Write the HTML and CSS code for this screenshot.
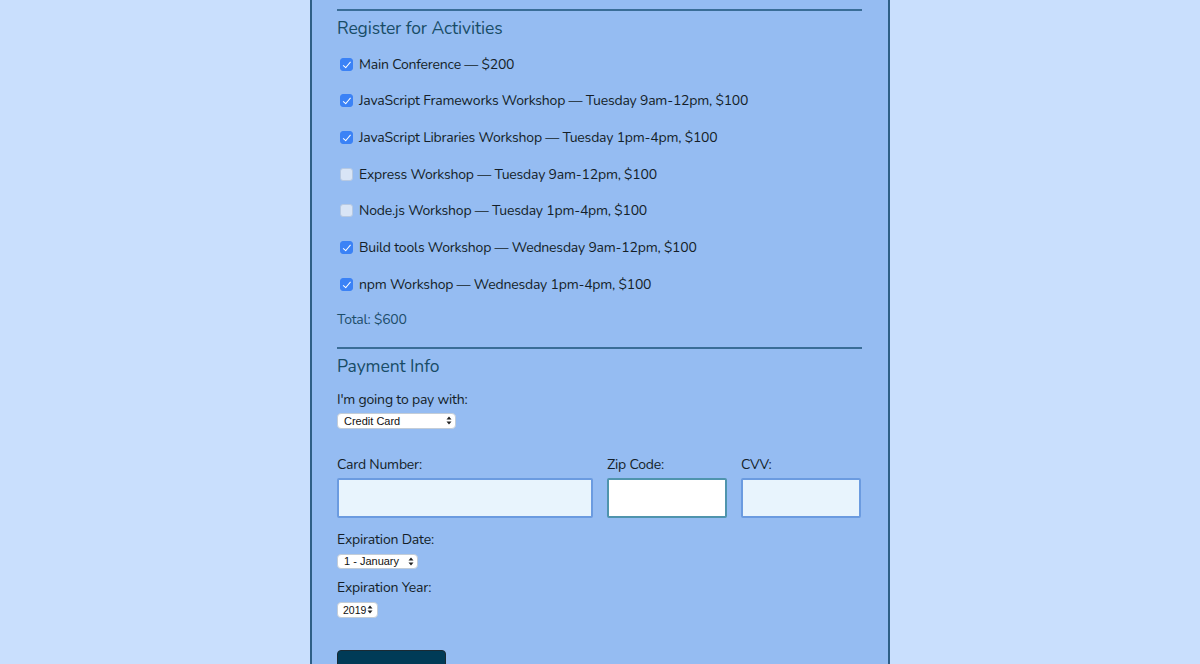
FILE: index.html
```html
<!DOCTYPE html>
<html lang="en">
<head>
<meta charset="utf-8">
<title>Register</title>
<link rel="stylesheet" href="styles.css">
</head>
<body>
<main class="form">
  <section class="section">
    <h2 class="legend">Register for Activities</h2>
    <div class="activities">
      <label class="row"><input type="checkbox" class="check" checked> Main Conference — $200</label>
      <label class="row"><input type="checkbox" class="check" checked> JavaScript Frameworks Workshop — Tuesday 9am-12pm, $100</label>
      <label class="row"><input type="checkbox" class="check" checked> JavaScript Libraries Workshop — Tuesday 1pm-4pm, $100</label>
      <label class="row"><input type="checkbox" class="check"> Express Workshop — Tuesday 9am-12pm, $100</label>
      <label class="row"><input type="checkbox" class="check"> Node.js Workshop — Tuesday 1pm-4pm, $100</label>
      <label class="row"><input type="checkbox" class="check" checked> Build tools Workshop — Wednesday 9am-12pm, $100</label>
      <label class="row"><input type="checkbox" class="check" checked> npm Workshop — Wednesday 1pm-4pm, $100</label>
    </div>
    <p class="total">Total: $600</p>
  </section>
  <section class="section payment">
    <h2 class="legend">Payment Info</h2>
    <p class="label first">I'm going to pay with:</p>
    <div class="select sel-pay"><span>Credit Card</span><svg class="arrows" width="6" height="9" viewBox="0 0 6 9"><path d="M3 0.5 L5.5 3.5 H0.5 Z M3 8.5 L5.5 5.5 H0.5 Z" fill="#222"/></svg></div>
    <div class="card-grid">
      <label class="label">Card Number:</label>
      <label class="label">Zip Code:</label>
      <label class="label">CVV:</label>
      <div class="input"></div>
      <div class="input focus"></div>
      <div class="input"></div>
    </div>
    <p class="label exp">Expiration Date:</p>
    <div class="select sel-month"><span>1 - January</span><svg class="arrows" width="6" height="9" viewBox="0 0 6 9"><path d="M3 0.5 L5.5 3.5 H0.5 Z M3 8.5 L5.5 5.5 H0.5 Z" fill="#222"/></svg></div>
    <p class="label exp2">Expiration Year:</p>
    <div class="select sel-year"><span>2019</span><svg class="arrows" width="6" height="9" viewBox="0 0 6 9"><path d="M3 0.5 L5.5 3.5 H0.5 Z M3 8.5 L5.5 5.5 H0.5 Z" fill="#222"/></svg></div>
    <div class="button"></div>
  </section>
</main>
</body>
</html>
```
FILE: styles.css
```css
html, body {
  margin: 0;
  padding: 0;
  background: #c9dffd;
  height: 664px;
  overflow: hidden;
}
body {
  font-family: "Nunito", Lato, "Noto Sans", sans-serif;
  color: #1a2530;
}
.form {
  width: 580px;
  box-sizing: border-box;
  margin: 0 auto;
  background: #95bcf2;
  border-left: 2px solid #2f5f86;
  border-right: 2px solid #2f5f86;
  padding: 9px 26px 40px 25px;
  min-height: 700px;
}
.section {
  border-top: 2px solid #3a6d97;
}
.legend {
  margin: 5px 0 0;
  font-size: 17.5px;
  line-height: 24px;
  font-weight: 400;
  letter-spacing: -0.1px;
  color: #184c67;
}
.activities {
  padding-top: 6px;
  display: flex;
  flex-direction: column;
}
.row {
  height: 36.67px;
  display: flex;
  align-items: center;
  font-size: 14px;
  letter-spacing: -0.2px;
  color: #141e28;
  white-space: nowrap;
}
.check {
  appearance: none;
  -webkit-appearance: none;
  margin: 0 6px 0 3px;
  width: 13px;
  height: 13px;
  border-radius: 3px;
  background: #d9e5f6;
  border: 1px solid #b7c9e2;
  box-sizing: border-box;
  position: relative;
  flex: none;
}
.check:checked {
  background: #3b82f6;
  border-color: #3b82f6;
}
.check:checked::after {
  content: "";
  position: absolute;
  left: 3.5px;
  top: 1px;
  width: 3px;
  height: 6.5px;
  border: solid #fff;
  border-width: 0 1.6px 1.6px 0;
  transform: rotate(40deg);
}
.total {
  margin: 7px 0 0;
  font-size: 14px;
  letter-spacing: -0.2px;
  line-height: 20px;
  color: #1d4d6a;
}
.payment {
  margin-top: 17px;
}
.label {
  display: block;
  margin: 0;
  font-size: 14px;
  letter-spacing: -0.2px;
  line-height: 20px;
  color: #141e28;
}
.label.first { margin-top: 12px; }
.select {
  margin-top: 3px;
  height: 16px;
  box-sizing: border-box;
  background: #fff;
  border: 1px solid #c3cdd8;
  border-radius: 4px;
  display: flex;
  align-items: center;
  justify-content: space-between;
  padding: 0 3px 0 6px;
  font-family: "Liberation Sans", Arial, sans-serif;
  font-size: 11px;
  color: #111;
}
.sel-pay { width: 119px; }
.sel-month { width: 81px; height: 15px; margin-top: 4px; }
.sel-year { width: 41px; padding-left: 5px; padding-right: 4px; margin-top: 4px; font-size: 10.5px; }
.card-grid {
  margin-top: 26px;
  display: grid;
  grid-template-columns: 256px 120px 120px;
  column-gap: 14px;
  row-gap: 3px;
}
.input {
  height: 40px;
  box-sizing: border-box;
  background: #e8f4fd;
  border: 2px solid #6b9be0;
  border-radius: 2px;
}
.input.focus {
  background: #fff;
  border-color: #4f94ad;
}
.exp { margin-top: 12px; }
.exp2 { margin-top: 9px; }
.button {
  margin-top: 32px;
  width: 109px;
  height: 40px;
  box-sizing: border-box;
  background: #003b57;
  border: 1px solid #1a2a33;
  border-radius: 4px;
}
```
